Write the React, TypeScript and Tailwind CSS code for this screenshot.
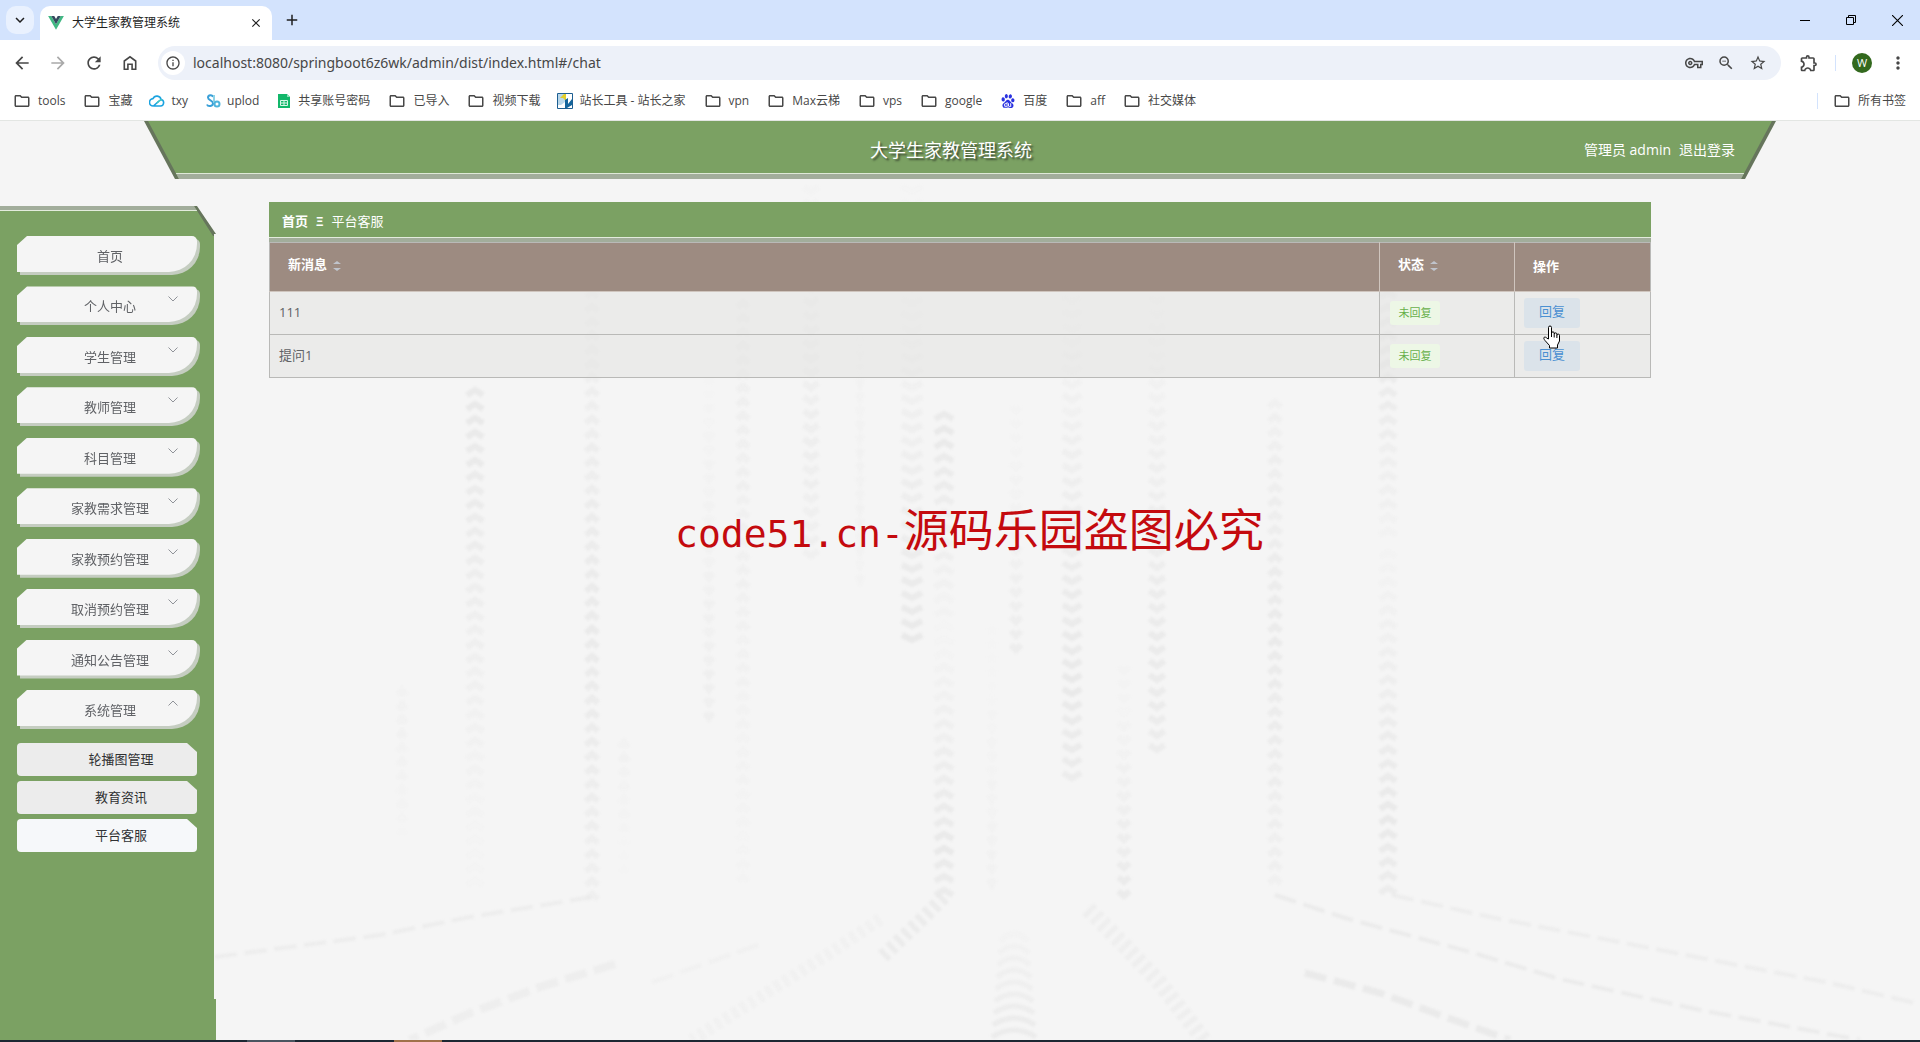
import { useState } from 'react';
import {
  MdArrowBack,
  MdArrowForward,
  MdRefresh,
  MdInfoOutline,
  MdOutlineVpnKey,
  MdZoomOut,
  MdStarBorder,
  MdOutlineExtension,
  MdMoreVert,
  MdOutlineFolder,
  MdClose,
  MdAdd,
  MdKeyboardArrowDown,
} from 'react-icons/md';
import { SiBaidu } from 'react-icons/si';

interface Bookmark {
  label: string;
  icon?: 'cloud' | 'link' | 'sheet' | 'tool' | 'baidu';
}

interface Message {
  id: number;
  ask: string;
  status: string;
}

interface Trail {
  x: number;
  from: number;
  to: number;
  size: number;
  up: boolean;
  peak: number; // where the trail is darkest, 0 = start, 1 = end
  strength: number;
}

const bookmarks: Bookmark[] = [
  { label: 'tools' },
  { label: '宝藏' },
  { label: 'txy', icon: 'cloud' },
  { label: 'uplod', icon: 'link' },
  { label: '共享账号密码', icon: 'sheet' },
  { label: '已导入' },
  { label: '视频下载' },
  { label: '站长工具 - 站长之家', icon: 'tool' },
  { label: 'vpn' },
  { label: 'Max云梯' },
  { label: 'vps' },
  { label: 'google' },
  { label: '百度', icon: 'baidu' },
  { label: 'aff' },
  { label: '社交媒体' },
];

const menus = [
  '个人中心',
  '学生管理',
  '教师管理',
  '科目管理',
  '家教需求管理',
  '家教预约管理',
  '取消预约管理',
  '通知公告管理',
  '系统管理',
];

const subMenus = ['轮播图管理', '教育资讯', '平台客服'];

const messages: Message[] = [
  { id: 1, ask: '111', status: '未回复' },
  { id: 2, ask: '提问1', status: '未回复' },
];

const trails: Trail[] = [
  { x: 402, from: 568, to: 728, size: 12, up: true, peak: 0.2, strength: 0.3 },
  { x: 475, from: 268, to: 770, size: 20, up: true, peak: 0.05, strength: 1 },
  { x: 592, from: 170, to: 780, size: 16, up: true, peak: 0.55, strength: 0.9 },
  { x: 624, from: 620, to: 760, size: 12, up: true, peak: 0, strength: 0.3 },
  { x: 709, from: 180, to: 600, size: 12, up: false, peak: 1, strength: 0.5 },
  { x: 743, from: 180, to: 770, size: 15, up: true, peak: 0.2, strength: 0.5 },
  { x: 811, from: 60, to: 440, size: 18, up: false, peak: 0.7, strength: 0.6 },
  { x: 860, from: 210, to: 460, size: 8, up: false, peak: 0.6, strength: 0.3 },
  { x: 912, from: 60, to: 522, size: 24, up: false, peak: 1, strength: 1 },
  { x: 944, from: 292, to: 530, size: 22, up: true, peak: 0.1, strength: 1 },
  { x: 944, from: 530, to: 780, size: 22, up: true, peak: 0.8, strength: 1 },
  { x: 992, from: 500, to: 765, size: 10, up: false, peak: 1, strength: 0.3 },
  { x: 1016, from: 280, to: 535, size: 14, up: false, peak: 1, strength: 0.7 },
  { x: 1072, from: 170, to: 658, size: 22, up: false, peak: 0.8, strength: 1 },
  { x: 1124, from: 540, to: 776, size: 15, up: false, peak: 1, strength: 0.9 },
  { x: 1157, from: 170, to: 625, size: 19, up: false, peak: 0.8, strength: 0.9 },
  { x: 1275, from: 280, to: 770, size: 16, up: true, peak: 0.5, strength: 0.9 },
  { x: 1388, from: 170, to: 420, size: 20, up: true, peak: 0.3, strength: 0.9 },
  { x: 1388, from: 430, to: 776, size: 20, up: true, peak: 0.8, strength: 1 },
];

// tracks running over the floor towards the viewer
const tracks = [
  { points: '1392,774 1490,796 1830,862 1915,882', width: 4, opacity: 0.7 },
  { points: '1275,774 1345,797 1470,831 1560,858 1700,889 1860,919', width: 4, opacity: 0.8 },
  { points: '1305,852 1380,872 1440,894 1510,919', width: 7, opacity: 0.9 },
  { points: '1088,788 1120,820 1160,862 1204,919', width: 16, opacity: 0.6 },
  { points: '944,776 920,800 880,838', width: 14, opacity: 0.8 },
  { points: '880,798 830,832 760,876 692,919', width: 12, opacity: 0.3 },
  { points: '592,776 470,796 380,814 215,836', width: 4, opacity: 0.7 },
  { points: '615,843 540,866 470,892 410,919', width: 8, opacity: 0.6 },
  { points: '758,824 650,862', width: 4, opacity: 0.3 },
];

const floorArcs = [812, 824, 836, 848, 860, 872, 884, 896, 908];

const BookmarkIcon: React.FC<{ icon?: Bookmark['icon'] }> = ({ icon }) => {
  if (icon === 'cloud') {
    return (
      <svg viewBox="0 0 16 16" className="size-4" fill="none" strokeWidth="1.6">
        <path d="M5 13h6.5a3.3 3.3 0 0 0 .6-6.5A4.3 4.3 0 0 0 4 5.6 3.7 3.7 0 0 0 4.4 13L10 8" stroke="#1ba3e0" />
        <path d="M8 10l2.5-2.3A2.6 2.6 0 0 1 13 7" stroke="#3ec6c6" />
      </svg>
    );
  }
  if (icon === 'link') {
    return (
      <svg viewBox="0 0 16 16" className="size-4" fill="none" strokeWidth="2">
        <path d="M8 4C7.500 1.500 3 1.500 3 4.600S8 7 8 10.200 3 14 2 11.500" stroke="#3aa0d8" />
        <path d="M9 2v8" stroke="#8fd3e6" />
        <circle cx="12" cy="11" r="2.500" stroke="#4fb4dc" />
      </svg>
    );
  }
  if (icon === 'sheet') {
    return (
      <svg viewBox="0 0 16 16" className="size-4">
        <path d="M2 1h9l3 3v11H2z" fill="#12b76a" />
        <path d="M11 1l3 3h-3z" fill="#8be0b7" />
        <path d="M4.500 7.500h7v5h-7zM8 7.500v5M4.500 10h7" fill="none" stroke="#d9f7e8" />
      </svg>
    );
  }
  if (icon === 'tool') {
    return (
      <svg viewBox="0 0 16 16" className="size-4">
        <path d="M.5.500h15v15H.5z" fill="#fff" stroke="#1d5f92" />
        <path d="M1 1h7v8L4 12H1z" fill="#b9d7ea" />
        <path d="M3 5l4-4h2v7L6 5z" fill="#e3cf2b" />
        <path d="M8 7l3-2v6l4-5v6l-5 3H8z" fill="#14659c" />
      </svg>
    );
  }
  if (icon === 'baidu') {
    return <SiBaidu className="size-[14px] text-[#2a32e0]" />;
  }
  return <MdOutlineFolder className="size-[18px] -mx-px text-[#474747]" />;
};

const BrowserBar: React.FC = () => {
  return (
    <div className="bg-white text-[#1f1f1f]">
      <div className="flex h-10 items-center bg-[#d3e3fd] pl-[6px]">
        <button aria-label="搜索标签页" className="flex size-7 items-center justify-center rounded-[10px] bg-[#e9f1fe]">
          <MdKeyboardArrowDown className="size-[18px]" />
        </button>
        <div className="ml-[6px] mt-[6px] flex h-[34px] w-[232px] items-center rounded-t-[10px] bg-white pl-2 pr-[9px]">
          <svg viewBox="0 0 18 16" className="h-[14px] w-4 shrink-0">
            <path d="M0 0h3.600L9 9.300 14.400 0H18L9 15.600z" fill="#41b883" />
            <path d="M3.600 0H7l2 3.500L11 0h3.400L9 9.300z" fill="#34495e" />
          </svg>
          <span className="ml-2 grow text-xs">大学生家教管理系统</span>
          <button aria-label="关闭标签页">
            <MdClose className="size-[14px]" />
          </button>
        </div>
        <button aria-label="新标签页" className="ml-[11px]">
          <MdAdd className="size-[18px]" />
        </button>
        <div className="ml-auto flex items-center">
          <button aria-label="最小化" className="flex h-10 w-[46px] items-center justify-center">
            <svg viewBox="0 0 10 10" className="size-[10px]" stroke="#000">
              <path d="M0 5.500h10" />
            </svg>
          </button>
          <button aria-label="还原" className="flex h-10 w-[46px] items-center justify-center">
            <svg viewBox="0 0 10 10" className="size-[10px]" stroke="#000" fill="none">
              <path d="M.5 2.500h7v7h-7zM2.500 2.500v-2h7v7h-2" />
            </svg>
          </button>
          <button aria-label="关闭" className="flex h-10 w-[46px] items-center justify-center">
            <svg viewBox="0 0 10 10" className="size-[11px]" stroke="#000">
              <path d="M0 0l10 10M10 0L0 10" />
            </svg>
          </button>
        </div>
      </div>

      <div className="flex h-[46px] items-center pl-3 pr-3 text-[#474747]">
        <div className="flex gap-4">
          <button aria-label="后退"><MdArrowBack className="size-5" /></button>
          <button aria-label="前进"><MdArrowForward className="size-5 text-[#a9a9a9]" /></button>
          <button aria-label="刷新"><MdRefresh className="size-5" /></button>
          <button aria-label="主页">
            <svg viewBox="0 0 20 20" className="size-5" fill="none" stroke="currentColor" strokeWidth="1.600">
              <path d="M4.300 16.200V8L10 3.800 15.700 8v8.200h-3.600v-5H7.900v5z" />
            </svg>
          </button>
        </div>
        <div className="ml-[18px] flex h-[34px] grow items-center rounded-full bg-[#edf1f9] pl-[3px] pr-[14px]">
          <span className="flex size-6 items-center justify-center rounded-full bg-white">
            <MdInfoOutline className="size-4" />
          </span>
          <input
            aria-label="地址"
            readOnly
            value="localhost:8080/springboot6z6wk/admin/dist/index.html#/chat"
            className="ml-2 grow bg-transparent font-['Noto_Sans',sans-serif] text-sm outline-none"
          />
          <div className="flex gap-[14px]">
            <button aria-label="密码"><MdOutlineVpnKey className="size-[18px]" /></button>
            <button aria-label="缩放"><MdZoomOut className="size-[18px]" /></button>
            <button aria-label="收藏"><MdStarBorder className="size-[18px]" /></button>
          </div>
        </div>
        <button aria-label="扩展程序" className="ml-[18px]"><MdOutlineExtension className="size-5" /></button>
        <span className="mx-4 h-4 w-px bg-[#d3e3fd]" />
        <button aria-label="用户" className="flex size-5 items-center justify-center rounded-full bg-[#33691e] text-[11px] text-white">
          W
        </button>
        <button aria-label="更多" className="ml-4"><MdMoreVert className="size-5" /></button>
      </div>

      <div className="flex h-[35px] items-center border-b border-[#e3e6e3] pl-[14px] pr-[14px] pb-1 text-xs text-[#474747]">
        <div className="flex gap-[19px]">
          {bookmarks.map((item) => (
            <a
              key={item.label}
              href="#"
              className={`flex items-center ${item.icon && item.icon !== 'baidu' ? '-ml-[2px] gap-[6px]' : 'gap-2'}`}
            >
              <BookmarkIcon icon={item.icon} />
              <span>{item.label}</span>
            </a>
          ))}
        </div>
        <span className="ml-auto h-4 w-px bg-[#d3e3fd]" />
        <a href="#" className="ml-4 flex items-center gap-2">
          <BookmarkIcon />
          <span>所有书签</span>
        </a>
      </div>
    </div>
  );
};

const chevrons = (trail: Trail) => {
  const list = [];
  const half = trail.size / 2;
  const rise = trail.up ? -5 : 5;
  for (let y = trail.from + 6; y < trail.to; y += 14) {
    const t = (y - trail.from) / (trail.to - trail.from);
    const opacity = trail.strength * Math.max(0.1, 1 - Math.abs(t - trail.peak) * 1.1);
    list.push(
      <path
        key={y}
        d={`M${trail.x - half + 2} ${y}L${trail.x} ${y + rise}L${trail.x + half - 2} ${y}`}
        opacity={opacity}
      />
    );
  }
  return list;
};

const Backdrop: React.FC = () => {
  return (
    <svg
      viewBox="0 0 1920 919"
      preserveAspectRatio="xMidYMin slice"
      className="absolute inset-0 h-full w-full blur-[1px]"
      fill="none"
      stroke="#e9e9e9"
      aria-hidden="true"
    >
      <g strokeWidth="6">
        {trails.map((trail, index) => (
          <g key={index}>{chevrons(trail)}</g>
        ))}
      </g>
      {tracks.map((track) => (
        <polyline
          key={track.points}
          points={track.points}
          strokeWidth={track.width}
          strokeDasharray={track.width > 10 ? '5 5' : '22 8'}
          opacity={track.opacity}
        />
      ))}
      {floorArcs.map((y, index) => (
        <path key={y} d={`M${1000 - index} ${y + 8}Q1014 ${y - 6} ${1028 + index} ${y + 8}`} strokeWidth="5" opacity={0.2 + index * 0.08} />
      ))}
    </svg>
  );
};

const SortCaret: React.FC = () => (
  <svg viewBox="0 0 10 12" className="ml-[5px] inline-block h-3 w-[10px]" fill="#c0c4cc">
    <path d="M5 1l4 3H1zM5 11l4-3H1z" />
  </svg>
);

const Sidebar: React.FC = () => {
  const [opened, setOpened] = useState<string>('系统管理');

  const itemClass =
    'relative block h-9 w-full rounded-tr-[5px] rounded-br-[28px] bg-[#f5f5f5] pt-1 pl-[6px] text-center text-[13px] leading-8 text-[#606266] [clip-path:polygon(0_9px,10px_0,100%_0,100%_100%,0_100%)]';

  return (
    <aside className="relative mt-[27px] w-[216px] shrink-0 bg-[#66755c] [clip-path:polygon(0_0,197px_0,216px_28px,214px_28px,214px_calc(100%_-_41px),216px_calc(100%_-_41px),216px_100%,0_100%)]">
      <div className="h-full bg-[#7ba163] [clip-path:polygon(0_0,194px_0,213px_30px,216px_30px,216px_100%,0_100%)]">
        <div className="h-[5px] border-b border-[#e3ebdd] bg-[#a2ad9b]" />
        <nav className="pl-[17px] pt-[25px]">
          <ul className="flex h-[490px] w-[180px] flex-col justify-between">
            <li className="[filter:drop-shadow(3px_3px_0_#c5cdc1)]">
              <a href="#" className={itemClass}>首页</a>
            </li>
            {menus.map((menu) => (
              <li key={menu} className="[filter:drop-shadow(3px_3px_0_#c5cdc1)]">
                <button className={itemClass} onClick={() => setOpened(opened === menu ? '' : menu)}>
                  {menu}
                  <svg viewBox="0 0 10 6" className="absolute right-[19px] top-[10px] h-[6px] w-[10px]" fill="none" stroke="#909399">
                    <path d={opened === menu ? 'M.5 5.500L5 1l4.500 4.500' : 'M.5.500L5 5 9.500.500'} />
                  </svg>
                </button>
              </li>
            ))}
          </ul>
          {opened === '系统管理' && (
            <ul className="mt-[17px] flex w-[180px] flex-col gap-[5px]">
              {subMenus.map((item) => (
                <li key={item}>
                  <a
                    href="#"
                    className={`block h-[33px] rounded-[4px] pl-7 text-center text-[13px] leading-8 text-[#303133] [clip-path:polygon(0_0,170px_0,100%_9px,100%_100%,0_100%)] ${
                      item === '平台客服' ? 'bg-[#f6f8fa]' : 'bg-[#ececec]'
                    }`}
                  >
                    {item}
                  </a>
                </li>
              ))}
            </ul>
          )}
        </nav>
      </div>
    </aside>
  );
};

const MessageTable: React.FC = () => {
  return (
    <table className="w-full table-fixed border-collapse border border-[#b9b9b7] text-left text-[13px]">
      <colgroup>
        <col />
        <col className="w-[135px]" />
        <col className="w-[136px]" />
      </colgroup>
      <thead>
        <tr className="h-[49px] bg-[#9d8b81] text-white">
          <th className="border-r border-b border-[#cfc5be] pl-[18px] pb-1">新消息<SortCaret /></th>
          <th className="border-r border-b border-[#cfc5be] pl-[18px] pb-1">状态<SortCaret /></th>
          <th className="border-b border-[#cfc5be] pl-[18px]">操作</th>
        </tr>
      </thead>
      <tbody>
        {messages.map((message) => (
          <tr key={message.id} className="h-[43px] bg-[#e5e4e2]/60 text-[#606266]">
            <td className="border border-[#b9b9b7] pl-[9px]">{message.ask}</td>
            <td className="border border-[#b9b9b7] pl-[10px]">
              <span className="block h-6 w-[50px] rounded-[3px] bg-[#edf7e6] text-center text-[11px] leading-6 text-[#67b04a]">
                {message.status}
              </span>
            </td>
            <td className="border border-[#b9b9b7] pl-[9px]">
              <button className="block h-[30px] w-14 rounded-[3px] bg-[#dbe3ea] pb-1 text-[13px] leading-6 text-[#4a90d2]">回复</button>
            </td>
          </tr>
        ))}
      </tbody>
    </table>
  );
};

const App: React.FC = () => {
  return (
    <div className="relative flex min-h-screen flex-col bg-[#f5f5f5] font-['Open_Sans','Noto_Sans_CJK_SC',sans-serif]">
      <BrowserBar />

      <div className="relative flex grow flex-col overflow-hidden">
        <Backdrop />

        <header className="relative mx-36 h-[58px] bg-[#66755c] text-white [clip-path:polygon(0_0,100%_0,calc(100%_-_31px)_100%,31px_100%)]">
          <div className="flex h-full items-center border-b-[5px] border-[#a2ad9b] bg-[#7ba163] pr-[18px] [clip-path:polygon(4px_0,calc(100%_-_4px)_0,calc(100%_-_35px)_100%,35px_100%)]">
            <div className="flex h-full grow items-center border-b border-[#dfe9d8] pt-[6px]">
              <div className="flex-1 px-[23px]" />
              <h1 className="text-lg [text-shadow:2px_2px_2px_#3c4a33]">大学生家教管理系统</h1>
              <div className="flex flex-1 justify-end gap-2 px-[23px] text-sm">
                <span>管理员 admin</span>
                <a href="#">退出登录</a>
              </div>
            </div>
          </div>
        </header>

        <div className="relative flex grow">
          <Sidebar />
          <main className="mr-[269px] ml-[53px] mt-[23px] grow">
            <div className="flex h-[35px] items-center gap-2 bg-[#7ba163] pt-1 pl-[13px] text-[13px] text-white">
              <a href="#" className="font-bold">首页</a>
              <span className="font-bold">Ξ</span>
              <span>平台客服</span>
            </div>
            <div className="h-[5px] border-t border-[#e3ebdd] bg-[#a2ad9b]" />
            <MessageTable />
          </main>
        </div>
      </div>

      <footer className="flex h-[2px] bg-[#1c2732]">
        <span className="ml-[247px] w-12 bg-[#4a5560]" />
        <span className="ml-[99px] w-12 bg-[#a0714a]" />
      </footer>

      <p className="pointer-events-none absolute left-[675px] top-[495px] flex items-baseline leading-[66px] whitespace-nowrap text-[#c40a0e]">
        <span className="font-['DejaVu_Sans_Mono',monospace] text-[38px]">code51.cn-</span>
        <span className="font-['Noto_Sans_CJK_SC',sans-serif] text-[45px]">源码乐园盗图必究</span>
      </p>

      <svg viewBox="0 0 18 24" className="pointer-events-none absolute left-[1543px] top-[325px] h-6 w-[18px]" fill="#fff" stroke="#000">
        <path d="M5.500 14V2.500a1.500 1.500 0 0 1 3 0V8a1.300 1.300 0 0 1 2.700.5V9a1.300 1.300 0 0 1 2.700.5v.7a1.300 1.300 0 0 1 2.600.5V16l-2 4v3H6.500v-2.500L2 15.500c-1.200-1.500-1.500-2.500-.8-3.200.8-.6 2 .1 2.800 1z" />
        <path d="M8.500 8v4M11.200 9v3.500M13.900 10v3" fill="none" />
      </svg>
    </div>
  );
};

export default App;
